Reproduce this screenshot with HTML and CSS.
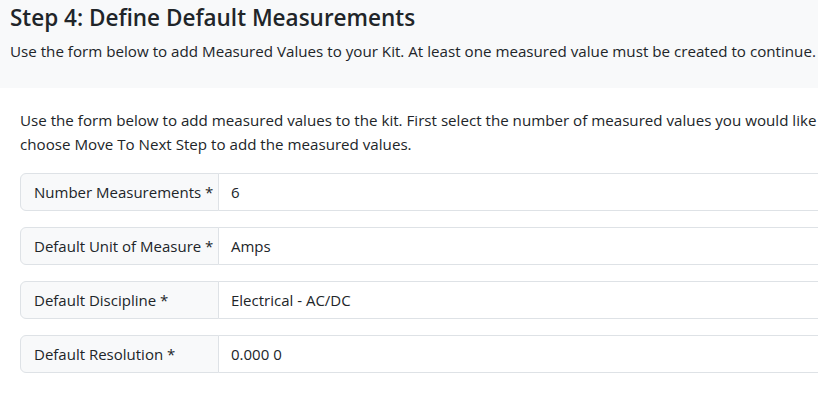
FILE: index.html
```html
<!DOCTYPE html>
<html lang="en">
<head>
<meta charset="utf-8">
<title>Step 4: Define Default Measurements</title>
<link rel="stylesheet" href="styles.css">
</head>
<body>
<div class="page">
  <header class="step-header">
    <h1 class="step-title">Step 4: Define Default Measurements</h1>
    <p class="step-lead">Use the form below to add Measured Values to your Kit. At least one measured value must be created to continue.</p>
  </header>
  <main class="step-body">
    <p class="intro">Use the form below to add measured values to the kit. First select the number of measured values you would like<br>choose Move To Next Step to add the measured values.</p>
    <div class="input-group">
      <span class="input-label">Number Measurements *</span>
      <div class="input-field">6</div>
    </div>
    <div class="input-group">
      <span class="input-label">Default Unit of Measure *</span>
      <div class="input-field">Amps</div>
    </div>
    <div class="input-group">
      <span class="input-label">Default Discipline *</span>
      <div class="input-field">Electrical - AC/DC</div>
    </div>
    <div class="input-group">
      <span class="input-label">Default Resolution *</span>
      <div class="input-field">0.000 0</div>
    </div>
  </main>
</div>
</body>
</html>
```
FILE: styles.css
```css
html, body {
  margin: 0;
  padding: 0;
  overflow: hidden;
  background: #fff;
}
body {
  font-family: "Open Sans", "Noto Sans", "Liberation Sans", sans-serif;
  font-size: 15px;
  line-height: 24px;
  color: #212529;
}
.page {
  width: 1200px;
}
.step-header {
  box-sizing: border-box;
  height: 88px;
  padding: 4px 10px 0;
  background: #f8f9fa;
}
.step-title {
  margin: 0 0 8px;
  font-size: 22.5px;
  line-height: 27px;
  font-weight: 600;
  white-space: nowrap;
}
.step-lead {
  margin: 0;
  font-size: 15.17px;
  white-space: nowrap;
}
.step-body {
  padding: 20px 20px 0;
}
.intro {
  margin: 0 0 17px;
  font-size: 15.15px;
  white-space: nowrap;
}
.input-group {
  display: flex;
  height: 38px;
  margin-bottom: 16px;
}
.input-label {
  box-sizing: border-box;
  width: 199px;
  display: flex;
  align-items: center;
  padding: 0 12px 0 13px;
  background: #f8f9fa;
  border: 1px solid #dee2e6;
  border-radius: 6px 0 0 6px;
  white-space: nowrap;
}
.input-field {
  flex: 1;
  box-sizing: border-box;
  display: flex;
  align-items: center;
  padding: 0 12px;
  margin-left: -1px;
  background: #fff;
  border: 1px solid #dee2e6;
  border-radius: 0 6px 6px 0;
  white-space: nowrap;
}
```
